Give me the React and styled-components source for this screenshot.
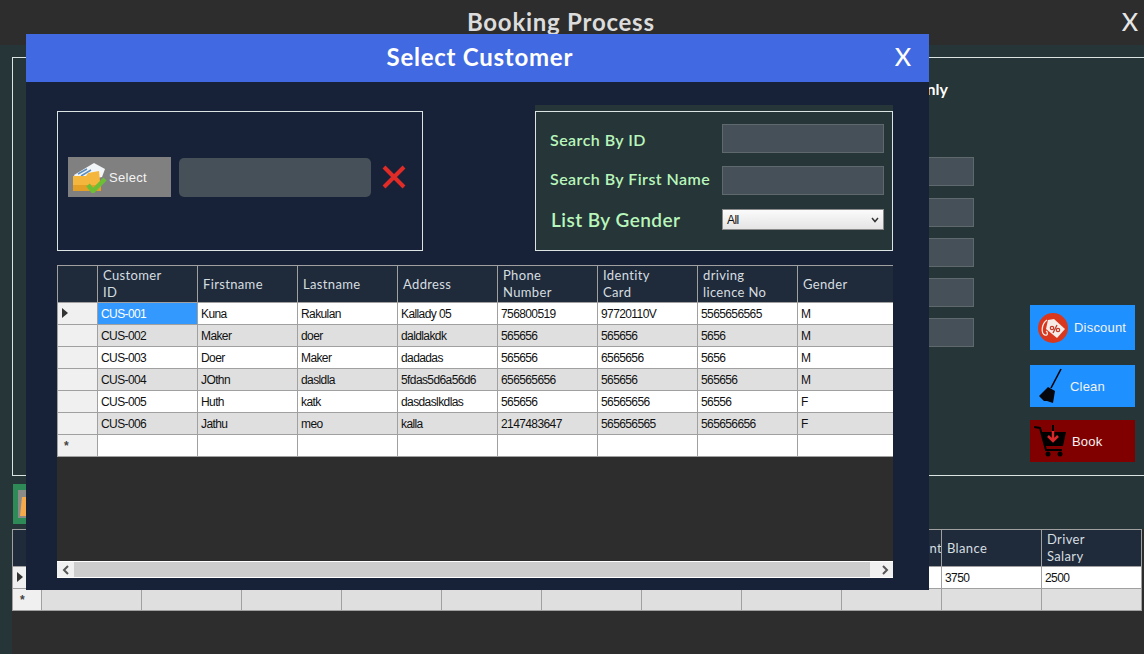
import React from 'react'
import styled, { createGlobalStyle } from 'styled-components'

const customers = [
  ['CUS-001', 'Kuna', 'Rakulan', 'Kallady 05', '756800519', '97720110V', '5565656565', 'M'],
  ['CUS-002', 'Maker', 'doer', 'daldlakdk', '565656', '565656', '5656', 'M'],
  ['CUS-003', 'Doer', 'Maker', 'dadadas', '565656', '6565656', '5656', 'M'],
  ['CUS-004', 'JOthn', 'dasldla', '5fdas5d6a56d6', '656565656', '565656', '565656', 'M'],
  ['CUS-005', 'Huth', 'katk', 'dasdaslkdlas', '565656', '56565656', '56556', 'F'],
  ['CUS-006', 'Jathu', 'meo', 'kalla', '2147483647', '565656565', '565656656', 'F'],
]

const customerHeads = ['Customer\nID', 'Firstname', 'Lastname', 'Address', 'Phone\nNumber', 'Identity\nCard', 'driving\nlicence No', 'Gender']

const bookingHeads = ['', '', '', '', '', '', '', '', 'Vehicle Amount', 'Blance', 'Driver\nSalary']
const bookingRow = ['', '', '', '', '', '', '', '', '', '3750', '2500']

const GlobalStyle = createGlobalStyle`
  html, body {
    margin: 0;
    padding: 0;
    overflow: hidden;
  }
  * {
    box-sizing: border-box;
  }
`

const Page = styled.div`
  position: relative;
  width: 100vw;
  height: 100vh;
  display: flex;
  flex-direction: column;
  overflow: hidden;
  background: #253538;
  font-family: "Liberation Sans", Arial, sans-serif;
`

const TitleBar = styled.div`
  height: 45px;
  flex: none;
  display: flex;
  align-items: center;
  padding: 0 6px 3px 0;
  background: #2d2d2d;
  color: #dcdcdc;
  font-family: Lato, sans-serif;
`

const Title = styled.div`
  flex: 1;
  text-align: center;
  font-size: 24px;
  font-weight: 700;
  letter-spacing: 0.75px;
`

const CloseMark = styled.div`
  font-size: 25px;
  font-weight: 500;
  line-height: 1;
  color: ${p => p.$color};
`

const Content = styled.div`
  flex: 1;
  min-height: 0;
  display: flex;
  flex-direction: column;
  padding-left: 12px;
`

const Panel = styled.div`
  width: 1140px;
  height: 419px;
  flex: none;
  margin-top: 12px;
  display: flex;
  border: 1px solid #dbe3e3;
`

const FormColumn = styled.div`
  width: 961px;
  flex: none;
  display: flex;
  flex-direction: column;
  align-items: flex-end;
  gap: 11.25px;
`

const OnlyLabel = styled.div`
  margin: 21px 26px 48px 0;
  color: #fff;
  font: 700 16px Lato, sans-serif;
`

const FormInput = styled.div`
  width: 200px;
  height: 29px;
  background: #465058;
  border: 1px solid #5f696d;
`

const ActionColumn = styled.div`
  margin-left: 56px;
  padding-top: 247px;
  display: flex;
  flex-direction: column;
`

const ActionButton = styled.div`
  width: 105px;
  height: ${p => p.$height}px;
  margin-bottom: ${p => p.$gap}px;
  display: flex;
  align-items: center;
  gap: ${p => p.$inner}px;
  padding-left: ${p => p.$left}px;
  background: ${p => p.$bg};
  color: #f2f2f2;
  font-size: 13px;
  letter-spacing: 0.2px;
`

const PrintButton = styled.div`
  width: 100px;
  height: 40px;
  flex: none;
  margin: 8px 0 5px 1px;
  padding: 6px 0 0 5px;
  background: #2e8b57;
`

const BottomArea = styled.div`
  flex: 1;
  min-height: 0;
  overflow: hidden;
  background: #2d2d2d;
`

const Grid = styled.table`
  table-layout: fixed;
  border-collapse: collapse;
  width: ${p => p.$rowHead + 100 * p.$cols}px;
`

const RowHeadCol = styled.col`
  width: ${p => p.$width}px;
`

const DataCol = styled.col`
  width: 100px;
`

const HeadCell = styled.th`
  height: 37px;
  padding: 0 5px;
  overflow: hidden;
  white-space: ${p => (p.$nowrap ? 'nowrap' : 'pre-line')};
  background: #1f2b3a;
  border: 1px solid #a0a0a0;
  color: #d6dde0;
  font: 400 13px/17px Lato, sans-serif;
  letter-spacing: 0.35px;
  text-align: left;
`

const Cell = styled.td`
  height: 22px;
  padding: 0 3px;
  overflow: hidden;
  white-space: nowrap;
  border: 1px solid #a0a0a0;
  background: ${p => (p.$selected ? '#3399ff' : p.$alt ? '#dfdfdf' : '#fff')};
  color: ${p => (p.$selected ? '#fff' : '#111')};
  font-size: 12px;
  letter-spacing: -0.6px;
`

const RowHeader = styled.td`
  height: 22px;
  padding: 0 0 0 ${p => p.$pad}px;
  border: 1px solid #a0a0a0;
  background: #f0f0f0;
  color: #444;
  font-size: 12px;
  font-weight: 700;
  line-height: 1;
`

const Modal = styled.div`
  position: absolute;
  left: 26px;
  top: 34px;
  width: 903px;
  height: 556px;
  display: flex;
  flex-direction: column;
  background: #172238;
`

const ModalHeader = styled.div`
  height: 48px;
  flex: none;
  display: flex;
  align-items: center;
  padding: 0 18px 3px 39px;
  background: #4169e1;
  color: #fff;
  font-family: Lato, sans-serif;
`

const ModalBody = styled.div`
  flex: 1;
  min-height: 0;
  display: flex;
  flex-direction: column;
  padding: 23px 36px 12px 31px;
`

const TopRow = styled.div`
  display: flex;
  justify-content: space-between;
  align-items: flex-start;
  flex: none;
`

const PickerBox = styled.div`
  width: 366px;
  height: 140px;
  margin-top: 6px;
  display: flex;
  align-items: center;
  padding: 0 0 8px 10px;
  border: 1px solid #dbe3e3;
`

const SelectButton = styled.div`
  width: 103px;
  height: 40px;
  flex: none;
  display: flex;
  align-items: center;
  padding-left: 4px;
  gap: 1px;
  background: #808080;
  color: #f4f4f4;
  font-size: 13px;
  letter-spacing: 0.3px;
`

const PickedValue = styled.div`
  width: 192px;
  height: 39px;
  margin: 0 11px 0 8px;
  background: #465058;
  border-radius: 5px;
`

const SearchPanel = styled.div`
  width: 358px;
  height: 146px;
  padding-top: 6px;
  background: #253538;
`

const SearchBox = styled.div`
  height: 140px;
  display: flex;
  flex-direction: column;
  gap: 13px;
  padding: 12px 8px 0 14px;
  border: 1px solid #dbe3e3;
`

const SearchRow = styled.div`
  display: flex;
  align-items: center;
  justify-content: space-between;
  margin-top: ${p => p.$top || 0}px;
`

const SearchLabel = styled.div`
  color: #b9f6bb;
  font: 600 ${p => p.$size}px/1 Lato, sans-serif;
  letter-spacing: 0.45px;
  margin-left: ${p => p.$left || 0}px;
  transform: translateY(${p => p.$shift || 0}px);
`

const SearchInput = styled.div`
  width: 162px;
  height: 29px;
  background: #465058;
  border: 1px solid #5f696d;
`

const GenderSelect = styled.div`
  width: 162px;
  height: 21px;
  display: flex;
  align-items: center;
  justify-content: space-between;
  padding: 0 4px;
  border: 1px solid #8a8a8a;
  background: linear-gradient(#fbfbfb, #e4e4e4);
  color: #111;
  font-size: 12px;
  letter-spacing: -0.6px;
`

const GridFrame = styled.div`
  flex: 1;
  min-height: 0;
  margin-top: 14px;
  display: flex;
  flex-direction: column;
  background: #2d2d2d;
`

const GridScroll = styled.div`
  flex: 1;
  min-height: 0;
  overflow: hidden;
`

const ScrollBar = styled.div`
  height: 17px;
  flex: none;
  display: flex;
  border-top: 1px solid #fff;
  border-bottom: 1px solid #fff;
  background: #f0f0f0;
`

const ScrollArrow = styled.div`
  width: 17px;
  flex: none;
  display: flex;
  align-items: center;
  justify-content: center;
`

const ScrollThumb = styled.div`
  flex: 1;
  margin-right: 6px;
  background: #cdcdcd;
`

function Chevron({ left }) {
  return (
    <svg width="8" height="10" viewBox="0 0 8 10">
      <path d={left ? 'M6 1 L2 5 L6 9' : 'M2 1 L6 5 L2 9'} fill="none" stroke="#555" strokeWidth="2" />
    </svg>
  )
}

function CurrentMark() {
  return (
    <svg width="6" height="10" viewBox="0 0 6 10">
      <path d="M0 0 L6 5 L0 10 Z" fill="#333" />
    </svg>
  )
}

function FolderIcon() {
  return (
    <svg width="36" height="32" viewBox="0 0 36 32">
      <path d="M2 14 L22 2 L33 8 L30 16 L6 22 Z" fill="#f2f5f7" />
      <path d="M6 13 L15 8 M9 15 L19 9" stroke="#5b8fc0" strokeWidth="1.5" />
      <path d="M1 15 L14 15 L16 12 L27 10 L29 30 L1 30 Z" fill="#f4b63c" />
      <path d="M1 24 L29 24 L29 30 L1 30 Z" fill="#e39f26" />
      <path d="M16 24 L21 30 L33 18" fill="none" stroke="#6cbf35" strokeWidth="4.5" />
    </svg>
  )
}

function DiscountIcon() {
  return (
    <svg width="30" height="30" viewBox="0 0 30 30">
      <circle cx="15" cy="15" r="15" fill="#d9381e" />
      <path d="M10 7 L16 6 L27 16 L19 25 L8 16 Z" fill="#f6ece8" />
      <path d="M9 7 C3 11 3 21 7 22 C10 23 10 19 8 18" fill="none" stroke="#f6ece8" strokeWidth="1.3" />
      <circle cx="14" cy="15" r="1.7" fill="none" stroke="#c23a25" strokeWidth="1.2" />
      <circle cx="20" cy="17" r="1.7" fill="none" stroke="#c23a25" strokeWidth="1.2" />
      <path d="M19 12 L15 20" stroke="#c23a25" strokeWidth="1.2" />
    </svg>
  )
}

function BroomIcon() {
  return (
    <svg width="26" height="36" viewBox="0 0 26 36">
      <path d="M23 1 L13 20" stroke="#000" strokeWidth="1.6" />
      <path d="M10 19 L17 23 L15 35 L9 33 L6 33 L1 28 Z" fill="#05070c" />
    </svg>
  )
}

function CartIcon() {
  return (
    <svg width="33" height="32" viewBox="0 0 33 32">
      <path d="M0 2 L6 3 L12 25 L28 25" fill="none" stroke="#000" strokeWidth="2" />
      <path d="M7 7 L32 7 L29 21 L11 21 Z" fill="#000" />
      <path d="M19 0 L19 15 M14 11 L19 16 L24 11" fill="none" stroke="#d8282a" strokeWidth="2.5" />
      <path d="M19 0 L19 6" stroke="#000" strokeWidth="2.5" />
      <circle cx="14" cy="29" r="2.5" fill="#000" />
      <circle cx="26" cy="29" r="2.5" fill="#000" />
    </svg>
  )
}

function PrintIcon() {
  return (
    <svg width="21" height="28" viewBox="0 0 21 28">
      <rect x="0" y="0" width="21" height="28" fill="#8a8a88" />
      <path d="M4 7 L21 7 L21 26 L2 26 Z" fill="#f5a94a" />
    </svg>
  )
}

function CustomerGrid() {
  return (
    <Grid $rowHead={40} $cols={8}>
      <colgroup>
        <RowHeadCol $width={40} />
        {customerHeads.map(h => <DataCol key={h} />)}
      </colgroup>
      <thead>
        <tr>
          <HeadCell />
          {customerHeads.map(h => <HeadCell key={h}>{h}</HeadCell>)}
        </tr>
      </thead>
      <tbody>
        {customers.map((row, i) => (
          <tr key={row[0]}>
            <RowHeader $pad={4}>{i === 0 && <CurrentMark />}</RowHeader>
            {row.map((value, c) => (
              <Cell key={c} $alt={i % 2 === 1} $selected={i === 0 && c === 0}>{value}</Cell>
            ))}
          </tr>
        ))}
        <tr>
          <RowHeader $pad={6}>*</RowHeader>
          {customerHeads.map(h => <Cell key={h} />)}
        </tr>
      </tbody>
    </Grid>
  )
}

function BookingGrid() {
  return (
    <Grid $rowHead={29} $cols={11}>
      <colgroup>
        <RowHeadCol $width={29} />
        {bookingHeads.map((h, i) => <DataCol key={i} />)}
      </colgroup>
      <thead>
        <tr>
          <HeadCell />
          {bookingHeads.map((h, i) => <HeadCell key={i} $nowrap={i === 8}>{h}</HeadCell>)}
        </tr>
      </thead>
      <tbody>
        <tr>
          <RowHeader $pad={4}><CurrentMark /></RowHeader>
          {bookingRow.map((value, i) => <Cell key={i}>{value}</Cell>)}
        </tr>
        <tr>
          <RowHeader $pad={7}>*</RowHeader>
          {bookingRow.map((value, i) => <Cell key={i} $alt />)}
        </tr>
      </tbody>
    </Grid>
  )
}

export default function App() {
  return (
    <Page>
      <GlobalStyle />
      <TitleBar>
        <Title>Booking Process</Title>
        <CloseMark $color="#e6e6e6">X</CloseMark>
      </TitleBar>
      <Content>
        <Panel>
          <FormColumn>
            <OnlyLabel>Only</OnlyLabel>
            <FormInput />
            <FormInput />
            <FormInput />
            <FormInput />
            <FormInput />
          </FormColumn>
          <ActionColumn>
            <ActionButton $height={45} $gap={15} $left={8} $inner={6} $bg="#1e90ff"><DiscountIcon />Discount</ActionButton>
            <ActionButton $height={42} $gap={13} $left={8} $inner={6} $bg="#1e90ff"><BroomIcon />Clean</ActionButton>
            <ActionButton $height={42} $gap={0} $left={4} $inner={5} $bg="#800000"><CartIcon />Book</ActionButton>
          </ActionColumn>
        </Panel>
        <PrintButton><PrintIcon /></PrintButton>
        <BottomArea>
          <BookingGrid />
        </BottomArea>
      </Content>
      <Modal>
        <ModalHeader>
          <Title>Select Customer</Title>
          <CloseMark $color="#fff">X</CloseMark>
        </ModalHeader>
        <ModalBody>
          <TopRow>
            <PickerBox>
              <SelectButton><FolderIcon />Select</SelectButton>
              <PickedValue />
              <svg width="24" height="24" viewBox="0 0 24 24">
                <path d="M2 2 L22 22 M22 2 L2 22" stroke="#e02b27" strokeWidth="4" />
              </svg>
            </PickerBox>
            <SearchPanel>
              <SearchBox>
                <SearchRow>
                  <SearchLabel $size={16} $shift={1}>Search By ID</SearchLabel>
                  <SearchInput />
                </SearchRow>
                <SearchRow>
                  <SearchLabel $size={16} $shift={-2}>Search By First Name</SearchLabel>
                  <SearchInput />
                </SearchRow>
                <SearchRow $top={1}>
                  <SearchLabel $size={19} $left={1}>List By Gender</SearchLabel>
                  <GenderSelect>
                    All
                    <svg width="8" height="6" viewBox="0 0 8 6">
                      <path d="M1 1 L4 4.5 L7 1" fill="none" stroke="#333" strokeWidth="1.5" />
                    </svg>
                  </GenderSelect>
                </SearchRow>
              </SearchBox>
            </SearchPanel>
          </TopRow>
          <GridFrame>
            <GridScroll>
              <CustomerGrid />
            </GridScroll>
            <ScrollBar>
              <ScrollArrow><Chevron left /></ScrollArrow>
              <ScrollThumb />
              <ScrollArrow><Chevron /></ScrollArrow>
            </ScrollBar>
          </GridFrame>
        </ModalBody>
      </Modal>
    </Page>
  )
}
